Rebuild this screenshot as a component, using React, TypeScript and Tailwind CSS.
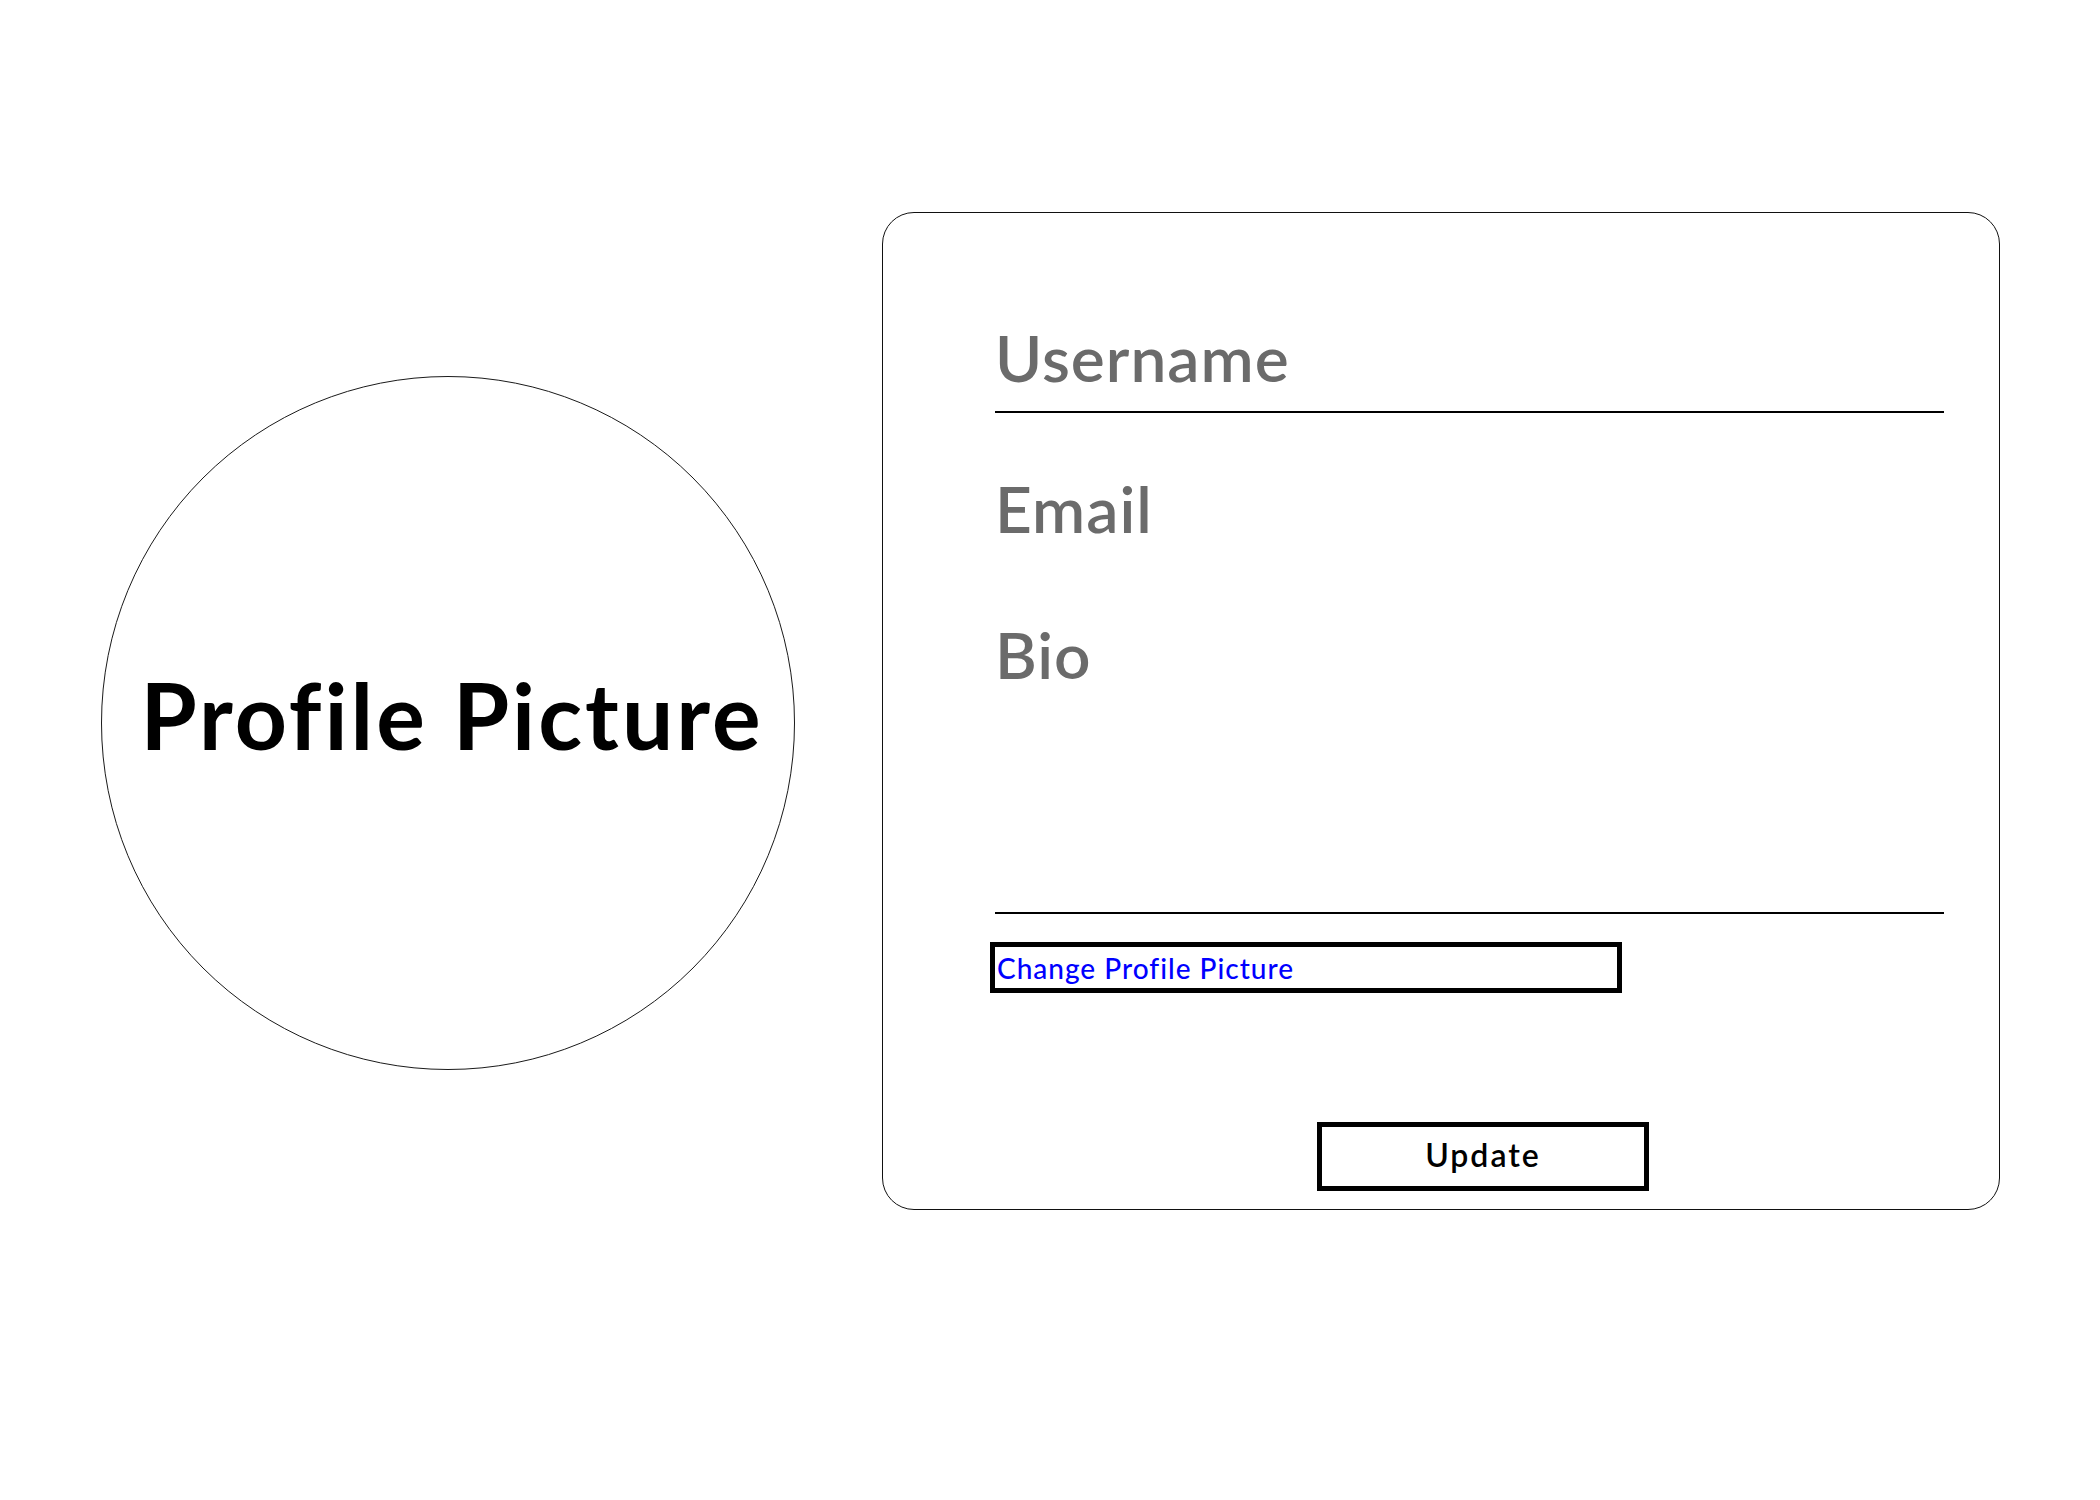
import React from 'react'

const font = { fontFamily: 'Lato, "Liberation Sans", sans-serif' }

function Avatar() {
  return (
    <div className="mt-[376px] flex h-[694px] w-[694px] shrink-0 items-center justify-center rounded-full border border-[#1a1a1a]">
      <span className="mb-[18px] ml-[8px] text-[91px] font-bold leading-none tracking-[3px] text-black">
        Profile Picture
      </span>
    </div>
  )
}

function ProfileForm() {
  return (
    <div className="mt-[212px] ml-[87px] h-[998px] w-[1118px] shrink-0 rounded-[32px] border border-[#111] pt-[113px] pl-[112px] pr-[55px]">
      {/* Username */}
      <div className="border-b-2 border-black pb-[21px]">
        <div className="text-[64px] font-semibold leading-none tracking-[1px] text-[#6b6b6b]">Username</div>
      </div>

      {/* Email */}
      <div className="mt-[64px] text-[64px] font-semibold leading-none tracking-[1px] text-[#6b6b6b]">Email</div>

      {/* Bio */}
      <div className="mt-[82px] h-[291px] border-b-2 border-black">
        <div className="text-[64px] font-semibold leading-none tracking-[1px] text-[#6b6b6b]">Bio</div>
      </div>

      <button className="-ml-[5px] mt-[28px] flex h-[51px] w-[632px] items-center border-[5px] border-black pl-[2px] pt-[1px] text-[28px] font-medium tracking-[1px] text-[#0000ff]">
        Change Profile Picture
      </button>

      <div className="mt-[129px] flex">
        <button className="ml-[322px] flex h-[69px] w-[332px] items-center justify-center border-[5px] border-black pb-[3px] text-[32px] font-semibold tracking-[2px] text-black">
          Update
        </button>
      </div>
    </div>
  )
}

export default function App() {
  return (
    <div className="min-h-[1500px] w-[2100px] bg-white" style={font}>
      <div className="flex items-start pl-[101px]">
        <Avatar />
        <ProfileForm />
      </div>
    </div>
  )
}
